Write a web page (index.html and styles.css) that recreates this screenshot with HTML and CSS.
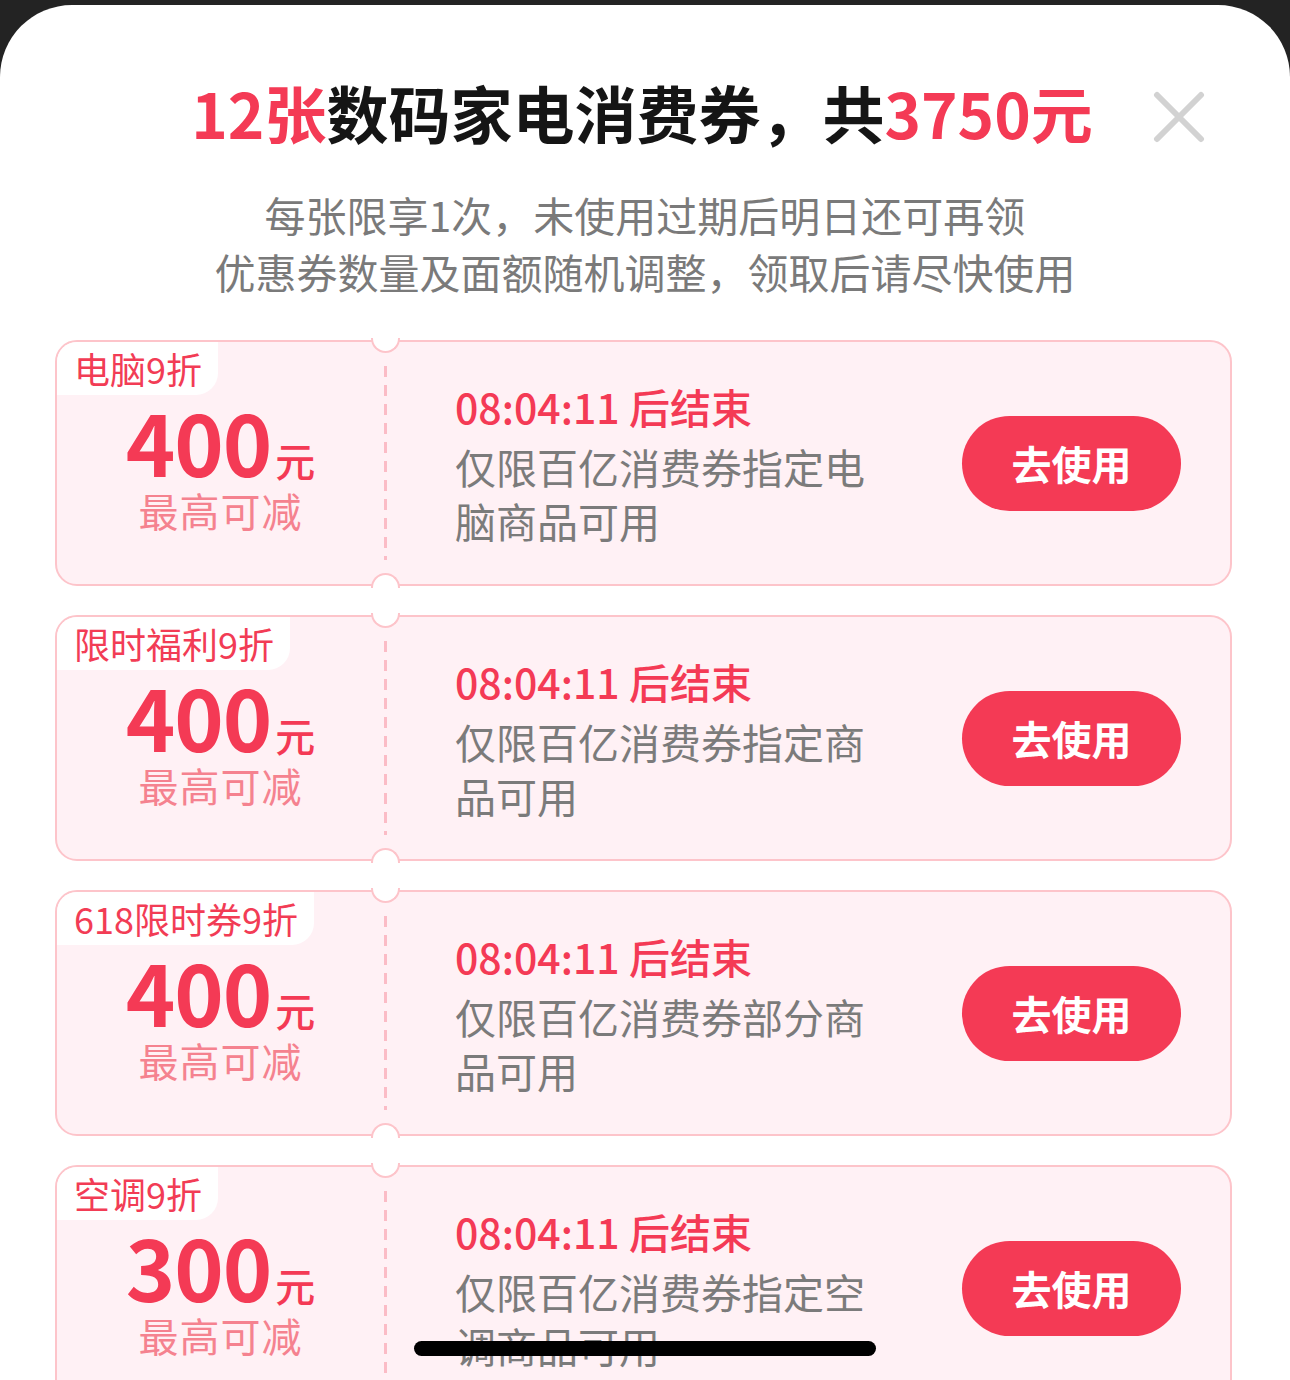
FILE: index.html
```html
<!DOCTYPE html>
<html lang="zh-CN">
<head>
  <meta charset="UTF-8">
  <title>数码家电消费券</title>
  <link rel="stylesheet" href="styles.css">
</head>
<body>
  <div class="sheet">
    <h1 class="title"><span class="red">12张</span>数码家电消费券，共<span class="red">3750元</span></h1>
    <svg class="close" width="52" height="52" viewBox="0 0 52 52">
      <path d="M4 4 L48 48 M48 4 L4 48" stroke="#d2d2d2" stroke-width="6" stroke-linecap="round"/>
    </svg>

    <p class="sub">每张限享1次，未使用过期后明日还可再领<br>优惠券数量及面额随机调整，领取后请尽快使用</p>

    <div class="list">
      <div class="coupon">
        <div class="left">
          <div class="tag">电脑9折</div>
          <div class="amount">400<small>元</small></div>
          <div class="hint">最高可减</div>
        </div>
        <div class="cut"></div>
        <div class="right">
          <div class="info">
            <div class="count">08:04:11 后结束</div>
            <div class="desc">仅限百亿消费券指定电脑商品可用</div>
          </div>
          <button class="use">去使用</button>
        </div>
      </div>

      <div class="coupon">
        <div class="left">
          <div class="tag">限时福利9折</div>
          <div class="amount">400<small>元</small></div>
          <div class="hint">最高可减</div>
        </div>
        <div class="cut"></div>
        <div class="right">
          <div class="info">
            <div class="count">08:04:11 后结束</div>
            <div class="desc">仅限百亿消费券指定商品可用</div>
          </div>
          <button class="use">去使用</button>
        </div>
      </div>

      <div class="coupon">
        <div class="left">
          <div class="tag">618限时券9折</div>
          <div class="amount">400<small>元</small></div>
          <div class="hint">最高可减</div>
        </div>
        <div class="cut"></div>
        <div class="right">
          <div class="info">
            <div class="count">08:04:11 后结束</div>
            <div class="desc">仅限百亿消费券部分商品可用</div>
          </div>
          <button class="use">去使用</button>
        </div>
      </div>

      <div class="coupon">
        <div class="left">
          <div class="tag">空调9折</div>
          <div class="amount">300<small>元</small></div>
          <div class="hint">最高可减</div>
        </div>
        <div class="cut"></div>
        <div class="right">
          <div class="info">
            <div class="count">08:04:11 后结束</div>
            <div class="desc">仅限百亿消费券指定空调商品可用</div>
          </div>
          <button class="use">去使用</button>
        </div>
      </div>
    </div>

    <div class="home-bar"></div>
  </div>
</body>
</html>
```

FILE: styles.css
```css
html, body {
  margin: 0;
  height: 100%;
}

body {
  background: #232323;
  font-family: "Noto Sans CJK SC", "Noto Sans", sans-serif;
  overflow: hidden;
}

.sheet {
  position: relative;
  margin-top: 5px;
  height: 1375px;
  background: #fff;
  border-radius: 72px 72px 0 0;
  padding-top: 67px;
  box-sizing: border-box;
  overflow: hidden;
}

.red {
  color: #f43a55;
}

.title {
  margin: 0;
  font-size: 62px;
  line-height: 80px;
  font-weight: 700;
  color: #151515;
  text-align: center;
  padding-right: 6px;
}

.close {
  position: absolute;
  top: 86px;
  right: 85px;
}

.sub {
  margin: 34px 0 0;
  font-size: 41px;
  line-height: 57px;
  color: #7a7a7a;
  text-align: center;
}

.list {
  margin-top: 40px;
  padding: 0 58px 0 55px;
  display: flex;
  flex-direction: column;
  gap: 29px;
}

.coupon {
  display: flex;
  height: 246px;
  box-sizing: border-box;
  border: 2px solid #fdc4ca;
  border-radius: 22px;
  background: #fff1f5;
  flex-shrink: 0;
}

.left {
  width: 327px;
  display: flex;
  flex-direction: column;
  align-items: center;
}

.tag {
  align-self: flex-start;
  height: 53px;
  line-height: 53px;
  padding: 0 16px 0 17px;
  background: #fff;
  border-radius: 20px 0 22px 0;
  color: #f23c55;
  font-size: 36px;
}

.amount {
  height: 82px;
  margin-top: 5px;
  line-height: 82px;
  font-size: 84px;
  font-weight: 700;
  color: #f43a55;
  letter-spacing: -1px;
}

.amount small {
  font-size: 40px;
  font-weight: 500;
  letter-spacing: 0;
  margin-left: 4px;
}

.hint {
  margin-top: 3px;
  font-size: 40px;
  line-height: 50px;
  color: #f5828f;
  letter-spacing: 1px;
}

.cut {
  position: relative;
  width: 3px;
  margin: 24px 0;
  background: repeating-linear-gradient(to bottom, #fbbcc6 0 11px, transparent 11px 19px);
}

.cut::before,
.cut::after {
  content: "";
  position: absolute;
  left: -13px;
  width: 25px;
  height: 13px;
  background: #fff;
  border: 2px solid #fdc4ca;
}

.cut::before {
  top: -28px;
  border-top: none;
  border-radius: 0 0 15px 15px;
}

.cut::after {
  bottom: -28px;
  border-bottom: none;
  border-radius: 15px 15px 0 0;
}

.right {
  flex: 1;
  display: flex;
  align-items: center;
  padding: 0 49px 0 68px;
}

.info {
  flex: 1;
}

.count {
  font-size: 41px;
  line-height: 54px;
  font-weight: 500;
  color: #f43a55;
  margin-bottom: 6px;
}

.desc {
  width: 420px;
  font-size: 41px;
  line-height: 54px;
  color: #7b7b7b;
}

.use {
  width: 219px;
  height: 95px;
  border: none;
  border-radius: 48px;
  background: #f43a55;
  color: #fff;
  font-family: inherit;
  font-size: 40px;
  font-weight: 700;
  cursor: pointer;
}

.home-bar {
  position: absolute;
  left: 414px;
  bottom: 24px;
  width: 462px;
  height: 15px;
  border-radius: 8px;
  background: #000;
}
```
